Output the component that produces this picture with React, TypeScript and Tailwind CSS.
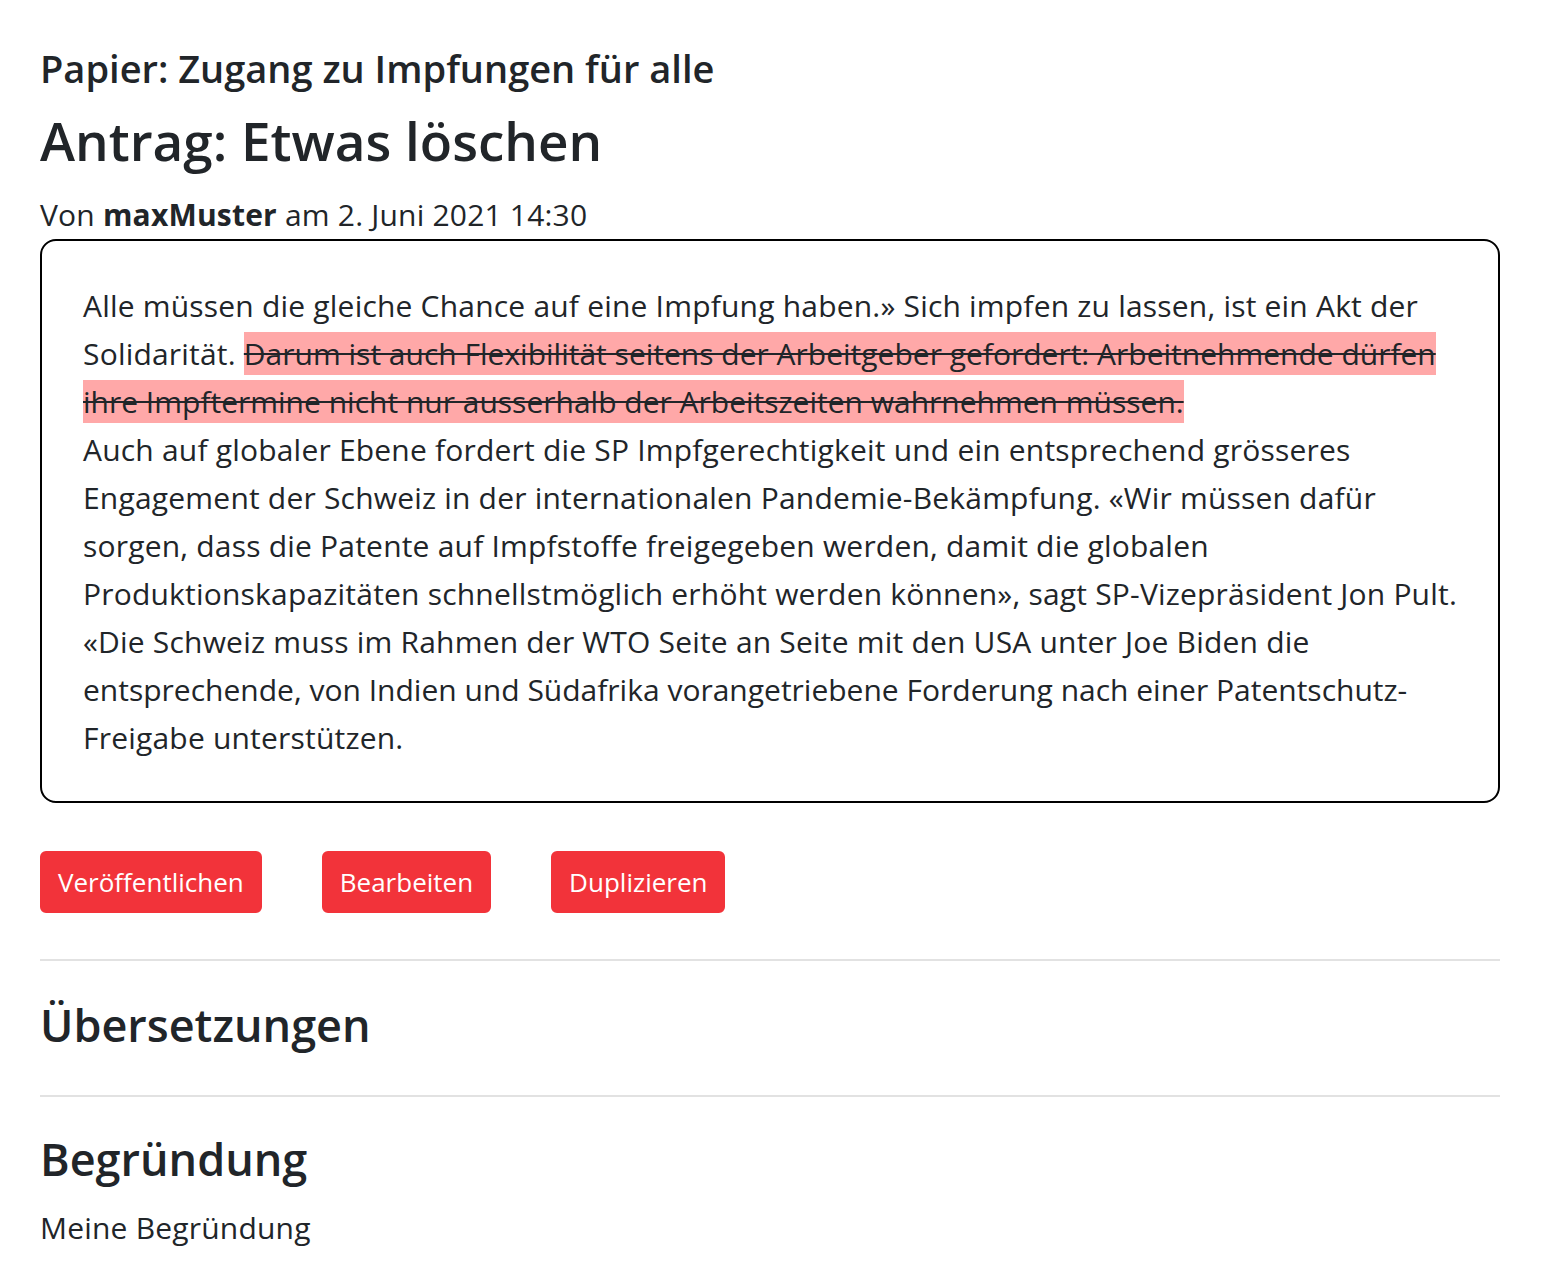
export default function App() {
  const del = "bg-[#ffa8a8] py-[1px] tracking-normal line-through decoration-[2px] decoration-[#212529]";
  return (
    <div className="min-h-screen bg-white text-[#212529] font-['Open_Sans',sans-serif]">
      <div className="w-[1460px] ml-[40px] pt-[44px] pb-[24px]">
        <h5 className="text-[38px] leading-[48px] font-semibold">Papier: Zugang zu Impfungen für alle</h5>
        <h2 className="mt-[11px] text-[53px] leading-[76px] font-semibold">Antrag: Etwas löschen</h2>
        <p className="mt-[12px] text-[30px] leading-[48px] tracking-[0.2px]">
          Von <b className="font-bold">maxMuster</b> am 2. Juni 2021 14:30
        </p>

        <div className="border-2 border-black rounded-[16px] pl-[41px] pr-[20px] pt-[41px] pb-[39px] text-[30px] leading-[48px] tracking-[0.2px] whitespace-nowrap">
          Alle müssen die gleiche Chance auf eine Impfung haben.» Sich impfen zu lassen, ist ein Akt der
          <br />
          Solidarität.{" "}
          <span className={del}>Darum ist auch Flexibilität seitens der Arbeitgeber gefordert: Arbeitnehmende dürfen</span>
          <br />
          <span className={del}>ihre Impftermine nicht nur ausserhalb der Arbeitszeiten wahrnehmen müssen.</span>
          <br />
          Auch auf globaler Ebene fordert die SP Impfgerechtigkeit und ein entsprechend grösseres
          <br />
          Engagement der Schweiz in der internationalen Pandemie-Bekämpfung. «Wir müssen dafür
          <br />
          sorgen, dass die Patente auf Impfstoffe freigegeben werden, damit die globalen
          <br />
          Produktionskapazitäten schnellstmöglich erhöht werden können», sagt SP-Vizepräsident Jon Pult.
          <br />
          «Die Schweiz muss im Rahmen der WTO Seite an Seite mit den USA unter Joe Biden die
          <br />
          <span className="tracking-normal">entsprechende, von Indien und Südafrika vorangetriebene Forderung nach einer Patentschutz-</span>
          <br />
          Freigabe unterstützen.
        </div>

        <div className="mt-[48px] flex gap-[60px]">
          {["Veröffentlichen", "Bearbeiten", "Duplizieren"].map((label) => (
            <button
              key={label}
              className="bg-[#f2333a] text-white border-2 border-[#f2333a] rounded-[6px] px-[16px] py-[8px] text-[26px] leading-[42px]"
            >
              {label}
            </button>
          ))}
        </div>

        <hr className="mt-[46px] border-0 h-[2px] bg-[#e2e2e2]" />
        <h3 className="mt-[30px] text-[45px] leading-[67px] font-semibold">Übersetzungen</h3>
        <hr className="mt-[37px] border-0 h-[2px] bg-[#e2e2e2]" />
        <h3 className="mt-[28px] text-[45px] leading-[67px] font-semibold">Begründung</h3>
        <p className="mt-[12px] text-[30px] leading-[48px] tracking-[0.2px]">Meine Begründung</p>
      </div>
    </div>
  );
}
